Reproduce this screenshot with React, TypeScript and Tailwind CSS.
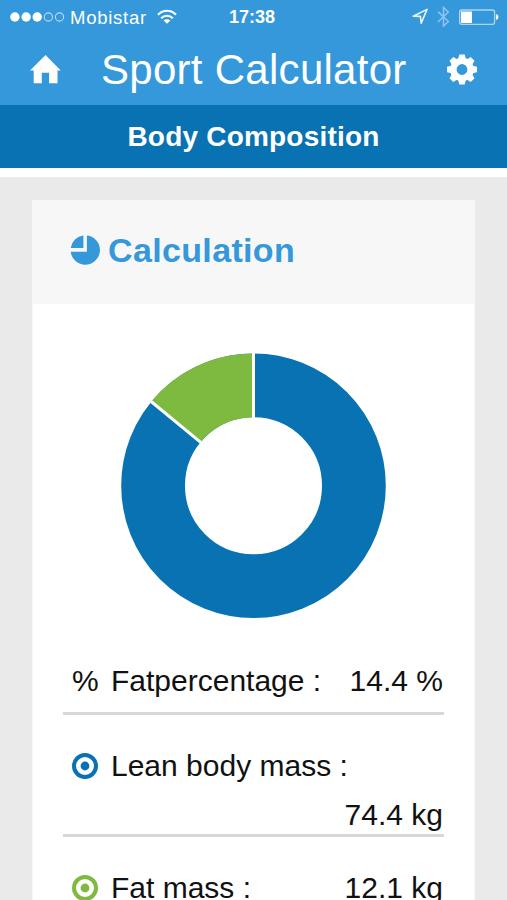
import React from "react";

const results = [
  { label: "Fatpercentage :", value: "14.4 %", icon: "percent" },
  { label: "Lean body mass :", value: "74.4 kg", icon: "blue" },
  { label: "Fat mass :", value: "12.1 kg", icon: "green" },
];

function StatusBar() {
  return (
    <div className="flex h-[34px] items-center pl-[10px] pr-[8px]">
      <svg className="h-[12px] w-[55px] shrink-0" viewBox="0 0 55 12">
        <g fill="#fff">
          <circle cx="4.9" cy="6" r="4.7" />
          <circle cx="16.1" cy="6" r="4.7" />
          <circle cx="27.2" cy="6" r="4.7" />
        </g>
        <g fill="none" stroke="#b9dbf5" strokeWidth="1.1">
          <circle cx="38.4" cy="6" r="4.1" />
          <circle cx="49.5" cy="6" r="4.1" />
        </g>
      </svg>
      <span className="ml-[5px] w-[87px] whitespace-nowrap text-[18.5px] leading-[35px] tracking-[0.75px]">Mobistar</span>
      <svg className="h-[16px] w-[20px] shrink-0" viewBox="0 0 20 16">
        <g fill="none" stroke="#fff" strokeWidth="2.2">
          <path d="M1 5.8 C6 0.4 14 0.4 19 5.8" />
          <path d="M4.2 9.2 C7.4 5.9 12.6 5.9 15.8 9.2" />
        </g>
        <path d="M6.6 11.4 C8.6 9.7 11.4 9.7 13.4 11.4 L10 14.8 Z" fill="#fff" />
      </svg>
      <span className="ml-[52px] whitespace-nowrap text-[18px] font-bold leading-[34px]">17:38</span>
      <svg className="ml-auto h-[24px] w-[88px] shrink-0" viewBox="411 5 88 24">
        <path d="M413.2 16.2 L427 9.4 L421.2 23.2 L420.4 16.4 Z" fill="none" stroke="#e8f4fd" strokeWidth="1.6" strokeLinejoin="round" />
        <path d="M438 11.6 L448.3 21.5 L443.5 26 V7.5 L448.3 12 L438 22" fill="none" stroke="#8dc4ee" strokeWidth="1.6" />
        <rect x="459.6" y="10" width="35" height="14.3" rx="2.2" fill="none" stroke="#add5f4" strokeWidth="1.3" />
        <rect x="461" y="11.5" width="11" height="11.5" fill="#fff" />
        <path d="M496 14 Q498.5 14.5 498.5 17 T496 20 Z" fill="#fff" />
      </svg>
    </div>
  );
}

function HomeIcon() {
  return (
    <svg className="h-[30px] w-[32px]" viewBox="-0.5 1 32 30">
      <path d="M16 1 L31.3 16.5 H28 V29.3 H19.6 V18.7 H12.3 V29.3 H4.2 V16.5 H0.5 Z" fill="#fff" />
    </svg>
  );
}

function GearIcon() {
  return (
    <svg className="h-[32px] w-[32px]" viewBox="-16 -15.5 32 32">
      <circle r="8.6" fill="none" stroke="#fff" strokeWidth="6.4" />
      {[0, 45, 90, 135, 180, 225, 270, 315].map((angle) => (
        <path key={angle} d="M-3.8 -10.5 L-2.7 -15 H2.7 L3.8 -10.5 Z" fill="#fff" transform={`rotate(${angle})`} />
      ))}
    </svg>
  );
}

function PieIcon() {
  return (
    <svg className="h-[30px] w-[30px]" viewBox="-15.3 -15 30 30">
      <path d="M1.6 -14.6 A14.7 14.7 0 1 1 -14.6 1.8 H1.6 Z M-1.9 -14.6 V-2.1 H-14.6 A14.7 14.7 0 0 1 -1.9 -14.6 Z" fill="#3498db" />
    </svg>
  );
}

function Donut() {
  return (
    <svg className="h-[268px] w-[268px]" viewBox="-133.5 -133.8 268 268">
      <circle r="100.4" fill="none" stroke="#0872b2" strokeWidth="63.8" />
      <path d="M0 -132.3 A132.3 132.3 0 0 0 -102.3 -84.2 L-53 -43.6 A68.5 68.5 0 0 1 0 -68.5 Z" fill="#7eba3f" />
      <path d="M0 -134 V-66 M-104.2 -85.8 L-51 -42" stroke="#fff" strokeWidth="3" />
    </svg>
  );
}

function RowIcon({ kind }: { kind: string }) {
  if (kind === "percent") {
    return <span className="w-[39px] text-[30px]">%</span>;
  }
  const color = kind === "blue" ? "#0872b2" : "#7eba3f";
  return (
    <svg className="mr-[13px] h-[26px] w-[26px]" viewBox="-13 -13 26 26">
      <circle r="11" fill="none" stroke={color} strokeWidth="4" />
      <circle r="4.4" fill={color} />
    </svg>
  );
}

export default function App() {
  return (
    <div className="h-[900px] w-[507px] overflow-hidden bg-[#eaeaea] font-['Liberation_Sans',Arial,sans-serif] text-white">
      <header className="h-[105px] bg-[#3498db]">
        <StatusBar />
        <div className="flex h-[71px] items-center pl-[29px] pr-[29px]">
          <HomeIcon />
          <h1 className="ml-10 whitespace-nowrap text-[42px] leading-[72px] tracking-[0.28px]">Sport Calculator</h1>
          <div className="ml-auto"><GearIcon /></div>
        </div>
      </header>
      <div className="h-[63px] bg-[#0872b2] text-center text-[28px] font-bold leading-[63px] tracking-[0.2px]">Body Composition</div>
      <div className="h-[9px] bg-white" />
      <main className="ml-8 mr-8 mt-[23px] h-[700px] border-x border-[#f7f7f7] bg-white">
        <div className="flex h-[104px] items-center bg-[#f7f7f7] pb-1 pl-[37px] text-[#3498db]">
          <PieIcon />
          <h2 className="ml-2 text-[34px] font-bold leading-[100px] tracking-[0.35px]">Calculation</h2>
        </div>
        <div className="flex h-[342px] justify-center pt-[48px]"><Donut /></div>
        <div className="ml-[30px] mr-[30px] text-[30px] leading-[49px] text-[#111]">
          <div className="flex h-[69px] items-start border-b-[3px] border-[#d8d8d8] pl-[9px] pr-px pt-[10px]">
            <RowIcon kind={results[0].icon} />
            <span>{results[0].label}</span>
            <span className="ml-auto">{results[0].value}</span>
          </div>
          <div className="h-[122px] border-b-[3px] border-[#d8d8d8] pl-[9px] pr-px pt-[26px]">
            <div className="flex h-[49px] items-center">
              <RowIcon kind={results[1].icon} />
              <span>{results[1].label}</span>
            </div>
            <div className="text-right">{results[1].value}</div>
          </div>
          <div className="flex items-center pl-[9px] pr-px pt-[26px]">
            <RowIcon kind={results[2].icon} />
            <span>{results[2].label}</span>
            <span className="ml-auto">{results[2].value}</span>
          </div>
        </div>
      </main>
    </div>
  );
}
